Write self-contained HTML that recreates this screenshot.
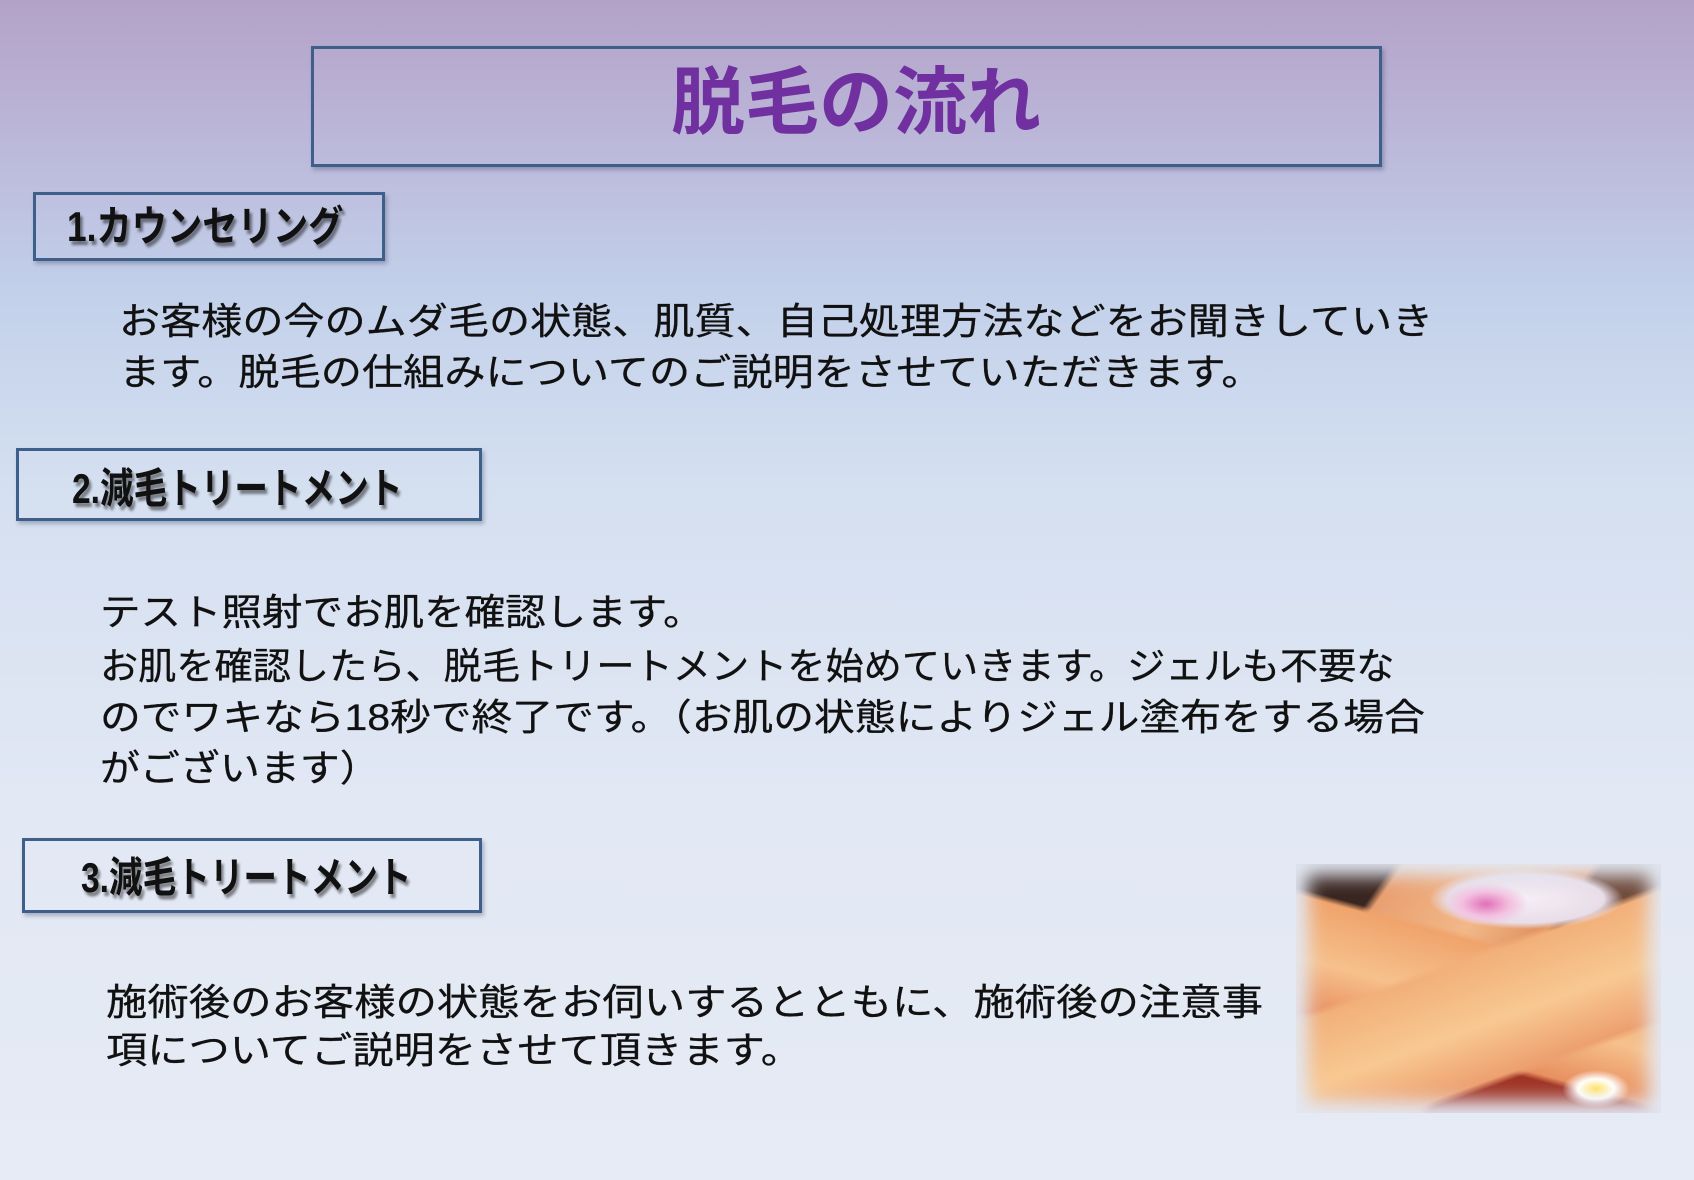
<!DOCTYPE html>
<html><head><meta charset="utf-8"><style>
html,body{margin:0;padding:0}
body{width:1694px;height:1180px;position:relative;overflow:hidden;
background:linear-gradient(180deg,#b3a2c7 0px,#bbb6d8 130px,#c2d0ea 290px,#d4dff0 480px,#e2e8f4 800px,#e6ebf5 1180px);
font-family:"Liberation Sans","Noto Sans CJK JP",sans-serif;color:#111}
.box{position:absolute;border:3px solid #3e5f8a;box-sizing:border-box;box-shadow:2px 3px 4px rgba(60,70,100,.35)}
.l{position:absolute;white-space:nowrap;font-size:37px;line-height:50px;transform-origin:left center;-webkit-text-stroke:0.3px #111}
.h{position:absolute;white-space:nowrap;font-size:42px;font-weight:bold;line-height:50px;transform-origin:left center;text-shadow:3px 4px 3px rgba(0,0,0,.45);color:#111}
</style></head><body>
<div class="box" style="left:311px;top:46px;width:1071px;height:121px"></div>
<div class="h" style="left:671px;top:70px;font-size:74px;line-height:66px;color:#7030a0;text-shadow:none;transform:scaleX(1)">脱毛の流れ</div>

<div class="box" style="left:33px;top:192px;width:352px;height:69px"></div>
<div class="h" style="left:67px;top:202px;transform:scaleX(.84)">1.カウンセリング</div>
<div class="l" style="left:119px;top:297px;transform:scaleX(1.111)">お客様の今のムダ毛の状態、肌質、自己処理方法などをお聞きしていき</div>
<div class="l" style="left:119px;top:348px;transform:scaleX(1.113)">ます。脱毛の仕組みについてのご説明をさせていただきます。</div>

<div class="box" style="left:16px;top:448px;width:466px;height:73px"></div>
<div class="h" style="left:72px;top:464px;transform:scaleX(.8)">2.減毛トリートメント</div>
<div class="l" style="left:100px;top:588px;transform:scaleX(1.095)">テスト照射でお肌を確認します。</div>
<div class="l" style="left:100px;top:642px;transform:scaleX(1.032)">お肌を確認したら、脱毛トリートメントを始めていきます。ジェルも不要な</div>
<div class="l" style="left:100px;top:693px;transform:scaleX(1.102)">のでワキなら18秒で終了です。（お肌の状態によりジェル塗布をする場合</div>
<div class="l" style="left:100px;top:744px;transform:scaleX(1.08)">がございます）</div>

<div class="box" style="left:22px;top:838px;width:460px;height:75px"></div>
<div class="h" style="left:81px;top:853px;transform:scaleX(.8)">3.減毛トリートメント</div>
<div class="l" style="left:106px;top:978px;transform:scaleX(1.118)">施術後のお客様の状態をお伺いするとともに、施術後の注意事</div>
<div class="l" style="left:106px;top:1026px;transform:scaleX(1.115)">項についてご説明をさせて頂きます。</div>

<div style="position:absolute;left:1296px;top:864px;width:365px;height:249px;overflow:hidden;
background:
radial-gradient(ellipse 60px 30px at 190px 40px,#e070b8 0,#f3c0e0 40%,transparent 70%),
radial-gradient(ellipse 130px 40px at 230px 35px,#f5eef5 0,#e8dde8 60%,transparent 75%),
radial-gradient(ellipse 45px 25px at 300px 225px,#ffe060 0,#fff 40%,transparent 75%),
linear-gradient(160deg,transparent 0,transparent 40%,#f2b07a 42%,#f8c892 60%,#eda070 75%,transparent 77%),
linear-gradient(195deg,transparent 0,transparent 35%,#f0a46c 37%,#f6c08c 55%,#e89060 70%,transparent 72%),
linear-gradient(125deg,#3a2620 0,#3a2620 18%,#e9a071 20%,#f2b888 40%,#e0905e 55%,transparent 57%),
linear-gradient(180deg,#6d4a3a 0,#7a4c3c 45%,#9a2e22 70%,#a33a2a 100%);">
<div style="position:absolute;inset:0;box-shadow:inset 0 0 18px 12px #e3e8f3"></div>
</div>
</body></html>
